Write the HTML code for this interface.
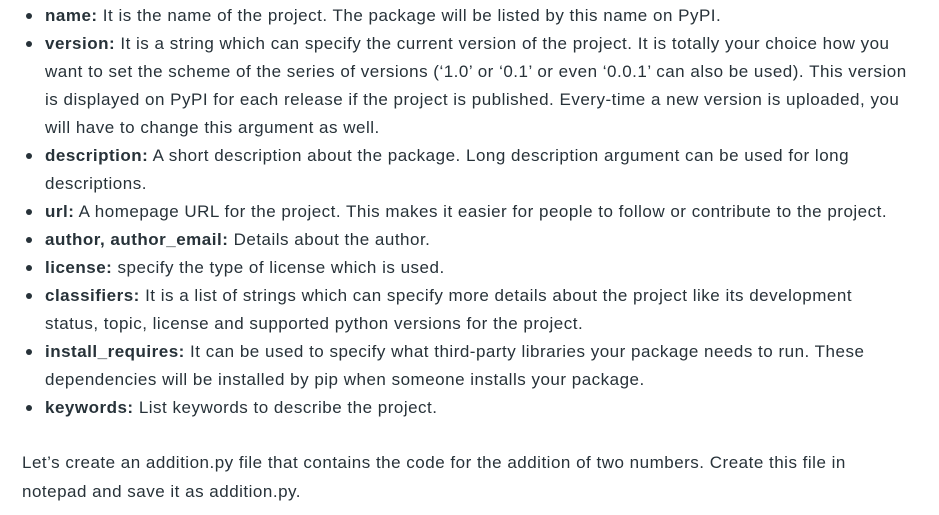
<!DOCTYPE html>
<html><head><meta charset="utf-8"><style>
body{margin:0;background:#fff;width:939px;height:515px;overflow:hidden;font-family:"Liberation Sans",sans-serif;color:#273239;font-size:17px;letter-spacing:0.5px;}
ul{margin:0;padding:0;list-style:none;position:absolute;top:2px;left:0;}
li{position:relative;padding-left:45px;line-height:28px;white-space:nowrap;}
li:before{content:"";position:absolute;left:26px;top:11px;width:6px;height:6px;border-radius:50%;background:#273239;}
b{font-weight:bold;}
p{position:absolute;left:22px;top:448px;margin:0;line-height:29px;white-space:nowrap;}
</style></head><body>
<ul>
<li><b>name:</b> It is the name of the project. The package will be listed by this name on PyPI.</li>
<li><b>version:</b> It is a string which can specify the current version of the project. It is totally your choice how you<br>want to set the scheme of the series of versions (‘1.0’ or ‘0.1’ or even ‘0.0.1’ can also be used). This version<br>is displayed on PyPI for each release if the project is published. Every-time a new version is uploaded, you<br>will have to change this argument as well.</li>
<li><b>description:</b> A short description about the package. Long description argument can be used for long<br>descriptions.</li>
<li><b>url:</b> A homepage URL for the project. This makes it easier for people to follow or contribute to the project.</li>
<li><b>author, author_email:</b> Details about the author.</li>
<li><b>license:</b> specify the type of license which is used.</li>
<li><b>classifiers:</b> It is a list of strings which can specify more details about the project like its development<br>status, topic, license and supported python versions for the project.</li>
<li><b>install_requires:</b> It can be used to specify what third-party libraries your package needs to run. These<br>dependencies will be installed by pip when someone installs your package.</li>
<li><b>keywords:</b> List keywords to describe the project.</li>
</ul>
<p>Let’s create an addition.py file that contains the code for the addition of two numbers. Create this file in<br>notepad and save it as addition.py.</p>
</body></html>
